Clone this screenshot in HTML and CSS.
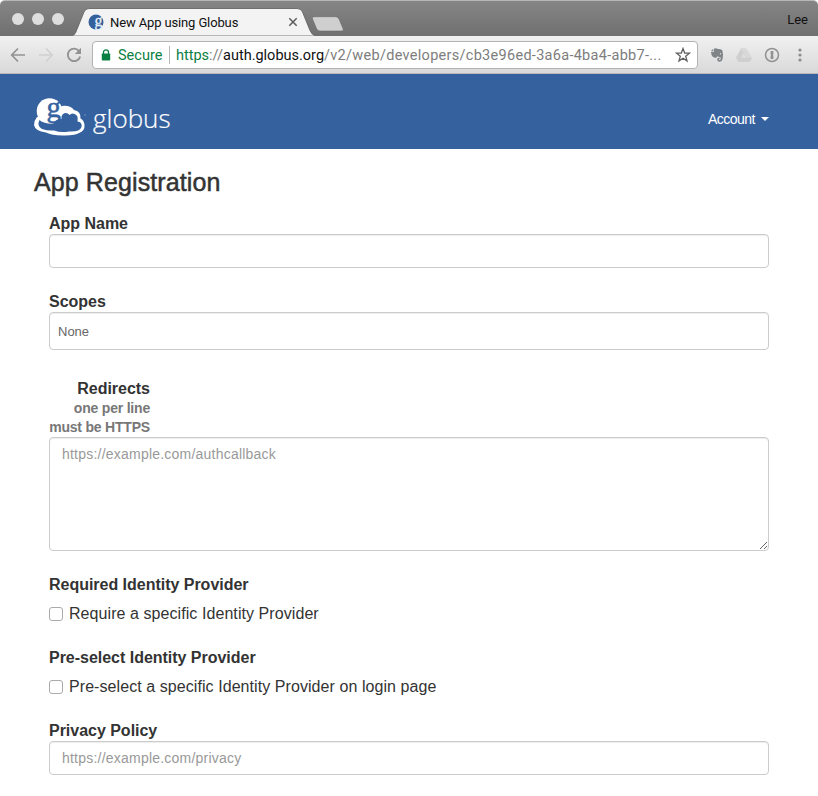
FILE: index.html
```html
<!DOCTYPE html>
<html lang="en">
<head>
<meta charset="utf-8">
<title>New App using Globus</title>
<link rel="stylesheet" href="styles.css">
</head>
<body>
<div class="window">
  <div class="tabbar">
    <div class="lights"><i></i><i></i><i></i></div>
    <div class="tab">
      <svg class="tab-shape" width="244" height="28" viewBox="0 0 244 28"><path d="M0 27.5 C3 27 3.500 25 4.500 22.500 L12 4 Q13.500 .5 17 .5 H225 Q229 .5 230.500 4 L238 22.500 Q240 27 243 27.500 V28 H0Z" fill="#f3f3f3" stroke="#5c5c5c" stroke-width=".8"/></svg>
      <svg class="favicon" width="16" height="16" viewBox="0 0 16 16"><circle cx="8" cy="8" r="7.500" fill="#34609c"/><text x="6.500" y="11.500" class="fav-g">g</text></svg>
      <span class="tab-title">New App using Globus</span>
      <svg class="tab-close" width="10" height="10" viewBox="0 0 10 10"><path d="M1.300 1.300 8.700 8.700M8.700 1.300 1.300 8.700" stroke="#5c5c5c" stroke-width="1.500"/></svg>
    </div>
    <svg class="newtab" width="34" height="16" viewBox="0 0 34 16"><path d="M3 .7H24.500Q27 .7 28 3L32 12.500Q33 15 30.500 15H9Q6.500 15 5.500 12.500L1.500 3Q.7.700 3 .7Z" fill="#cfcfcf" stroke="#6a6a6a" stroke-width=".6"/></svg>
    <span class="user">Lee</span>
  </div>
  <div class="toolbar">
    <div class="nav">
      <svg width="16" height="16" viewBox="0 0 16 16"><path d="M15 8H2M8 1.500 1.700 8 8 14.500" fill="none" stroke="#929292" stroke-width="1.700"/></svg>
      <svg width="16" height="16" viewBox="0 0 16 16"><path d="M1 8h13M8 1.500 14.300 8 8 14.500" fill="none" stroke="#d0d0d0" stroke-width="1.500"/></svg>
      <svg width="16" height="16" viewBox="0 0 16 16"><path d="M13.300 4.300A6.300 6.300 0 1 0 14.200 9.500" fill="none" stroke="#929292" stroke-width="1.800"/><path d="M15 .8V7H8.800Z" fill="#929292"/></svg>
    </div>
    <div class="address">
      <svg class="lock" width="10" height="12" viewBox="0 0 10 12"><path d="M2.500 5V3.300a2.500 2.500 0 0 1 5 0V5" fill="none" stroke="#0b8043" stroke-width="1.300"/><rect x=".8" y="4.500" width="8.400" height="7" rx=".8" fill="#0b8043"/></svg>
      <span class="secure">Secure</span>
      <span class="url"><span class="scheme">https</span>://<b>auth.globus.org</b><span class="path">/v2/web/developers/cb3e96ed-3a6a-4ba4-abb7-...</span></span>
      <svg class="star" width="16" height="16" viewBox="0 0 16 16"><path d="M8 1.500 9.700 6 14.500 6.200 10.700 9.200 12 13.900 8 11.200 4 13.900 5.300 9.200 1.500 6.200 6.300 6Z" fill="none" stroke="#616161" stroke-width="1.300"/></svg>
    </div>
    <div class="extensions">
      <svg width="14" height="16" viewBox="0 0 14 16"><path d="M4 1.800Q6 .8 8 2Q12 1.800 12.500 4Q13.500 8 12.600 12Q12 14.800 9.600 14.700Q7 14.500 7.200 12Q7.500 10.300 9.700 10.800V12H8.700Q8.500 13 10 13Q11.300 12.500 10.300 10Q8.500 10.500 7.800 9Q7.200 11 5 10.700Q2 10.400 1.200 6.500Q.8 5 1.500 4.800H4ZM3.300 1.800V4H1Z" fill="#808486"/><circle cx="10.500" cy="6.700" r=".7" fill="#e5e5e5"/></svg>
      <svg width="18" height="16" viewBox="0 0 18 16"><path d="M6 1.500h5L17 11.500 14.500 15H3.500L1 10.800Z" fill="#cfcfcf"/><path d="M8.500 6 5.800 10.700h5.400Z" fill="#dedede"/><path d="M6 1.500 11.200 10.700H17L11 1.500Z" fill="#d8d8d8"/></svg>
      <svg width="16" height="16" viewBox="0 0 16 16"><circle cx="8" cy="8" r="6.500" fill="none" stroke="#929292" stroke-width="1.500"/><path d="M6.600 4H9.400V7L8.900 7.700 9.400 8.400V12H6.600V9L7.100 8.300 6.600 7.600Z" fill="#929292"/></svg>
      <svg class="menu" width="4" height="16" viewBox="0 0 4 16"><g fill="#8b8b8b"><circle cx="2" cy="3" r="1.600"/><circle cx="2" cy="8" r="1.600"/><circle cx="2" cy="13" r="1.600"/></g></svg>
    </div>
  </div>
  <header class="site-header">
    <div class="brand">
      <svg width="54" height="42" viewBox="0 0 54 42"><circle cx="16.500" cy="15" r="12.800" fill="#fff"/><path d="M4 21Q.8 25 1 29Q2 35 13 36.500Q20 40 32 39.500Q43 39 46 37Q52 35 51.500 29Q51 24 47.500 22.500Q48 15 41 14Q37 9 29 10L24 14Z" fill="#fff"/><path d="M6.500 24Q3.500 30 9 33Q15 35 21 34.500Q28 37 36 35.500Q47 36 48.500 31Q49.500 26 44.500 25.500Q46 18.500 40 17.500Q37.500 17.500 36.500 19Q33.500 15.500 29.500 18.500Q28 20 28.500 23Q22 23 20.500 27.500Q14 28 11 26.500Q8 25.500 6.500 24Z" fill="#35619f"/><text x="13.500" y="21" class="logo-g">g</text><circle cx="52" cy="19" r=".6" fill="#b9cae2"/></svg>
      <span class="wordmark">globus</span>
    </div>
    <div class="account">Account <i class="caret"></i></div>
  </header>
  <main>
    <h1>App Registration</h1>
    <form>
      <div class="field">
        <label for="name">App Name</label>
        <input id="name" class="control" type="text">
      </div>
      <div class="field scopes">
        <label>Scopes</label>
        <div class="control picker">None</div>
      </div>
      <div class="field">
        <label class="stacked" for="redirects">Redirects<small>one per line<br>must be HTTPS</small></label>
        <textarea id="redirects" class="control" placeholder="https://example.com/authcallback"></textarea>
      </div>
      <div class="field choice">
        <label>Required Identity Provider</label>
        <div class="check"><i></i><span>Require a specific Identity Provider</span></div>
      </div>
      <div class="field choice">
        <label>Pre-select Identity Provider</label>
        <div class="check"><i></i><span>Pre-select a specific Identity Provider on login page</span></div>
      </div>
      <div class="field">
        <label for="privacy">Privacy Policy</label>
        <input id="privacy" class="control" type="text" placeholder="https://example.com/privacy">
      </div>
    </form>
  </main>
</div>
</body>
</html>
```
FILE: styles.css
```css
* { box-sizing: border-box; }
body { margin: 0; background: #fff; font-family: "Liberation Sans", Arial, sans-serif; color: #333; }
svg { display: block; flex: none; }
.window { height: 796px; overflow: hidden; }

.tabbar { display: flex; align-items: flex-end; height: 36px; background: linear-gradient(#858585, #707070); border-top: 1px solid #b4b8b4; border-radius: 5px 5px 0 0; }
.lights { display: flex; gap: 8px; padding-left: 12px; width: 72px; height: 23px; }
.lights i { width: 12px; height: 12px; border-radius: 50%; background: #dedede; }
.tab { position: relative; display: flex; align-items: center; width: 244px; height: 28px; padding-left: 16px; }
.tab-shape { position: absolute; left: 0; top: 0; }
.favicon, .tab-title, .tab-close { position: relative; }
.favicon, .brand svg { overflow: visible; }
.fav-g { font: 16px "Liberation Serif", serif; fill: #e6f1fb; stroke: #e6f1fb; stroke-width: 0.3px; }
.tab-title { width: 179px; padding-left: 6px; font: 13px Roboto, sans-serif; color: #111; letter-spacing: -0.13px; }
.tab-close { margin-left: 5px; }
.newtab { margin: 0 0 4px -5px; }
.user { margin: 0 10px 9px auto; font: 13px/15px Roboto, sans-serif; color: #111; }

.toolbar { display: flex; align-items: center; height: 38px; padding-left: 10px; background: linear-gradient(#f1f1f1, #d9d9d9); border-bottom: 1px solid #b9b9b9; }
.nav { display: flex; gap: 12px; width: 82px; }
.address { display: flex; align-items: center; width: 606px; height: 28px; padding: 0 6px 0 8px; background: #fff; border: 1px solid #b3b3b3; border-radius: 4px; font: 14.5px Roboto, sans-serif; }
.secure { margin-left: 7px; padding-right: 6px; color: #0b8043; border-right: 1px solid #b8b8b8; width: 52px; white-space: nowrap; }
.url { margin-left: 6px; color: #7d7d7d; white-space: nowrap; }
.url b { font-weight: 400; color: #111; }
.url .scheme { color: #0b8043; }
.url .path { letter-spacing: 0.29px; }
.secure, .url { padding-top: 1px; }
.star { margin-left: auto; }
.extensions { display: flex; align-items: center; gap: 11px; margin-left: 12px; }
.menu { margin-left: 7px; }

.site-header { display: flex; align-items: center; justify-content: space-between; height: 75px; padding: 10px 49px 0 33px; background: #35619f; color: #fff; }
.brand { display: flex; align-items: center; }
.logo-g { font: 29px "Liberation Serif", serif; fill: #35619f; stroke: #35619f; stroke-width: 0.5px; }
.wordmark { margin: 2px 0 0 6px; font: 300 26px/32px "Open Sans", sans-serif; -webkit-text-stroke: 0.2px #fff; }
.account { display: flex; align-items: center; gap: 6px; margin-top: 4px; font-size: 14px; letter-spacing: -0.5px; }
.caret { border: 4px solid transparent; border-top-color: #fff; border-bottom: 0; }

main { padding: 16px 49px 0 34px; }
h1 { margin: 0; height: 47px; font-size: 25px; line-height: 34px; font-weight: 400; letter-spacing: 0.1px; -webkit-text-stroke: 0.5px #333; white-space: nowrap; }
form { padding-left: 15px; }
.field { margin-bottom: 22px; }
.scopes { margin-bottom: 27px; }
.choice { margin-bottom: 17px; }
label { display: block; height: 22px; font-size: 16px; line-height: 24px; font-weight: 700; letter-spacing: -0.02px; }
.stacked { width: 101px; height: 60px; text-align: right; white-space: nowrap; }
.stacked small { display: block; margin-top: -2px; font-size: 14px; line-height: 19px; letter-spacing: -0.2px; color: #777; }
.control { display: block; width: 100%; height: 34px; padding: 6px 12px; background: #fff; border: 1px solid #ccc; border-radius: 4px; box-shadow: inset 0 1px 1px rgba(0,0,0,.075); font: 14px/20px "Liberation Sans", Arial, sans-serif; color: #555; outline: 0; }
.control::placeholder { color: #999; opacity: 1; letter-spacing: 0.22px; }
.picker { height: 38px; padding: 9px 8px 7px; font-size: 13px; color: #666; }
textarea.control { height: 114px; resize: vertical; }
.check { display: flex; align-items: center; gap: 6px; height: 30px; margin-top: 4px; font-size: 16px; letter-spacing: 0.07px; white-space: nowrap; }
.check i { width: 14px; height: 14px; border: 1px solid #aaa; border-radius: 3px; background: #fff; }
```
